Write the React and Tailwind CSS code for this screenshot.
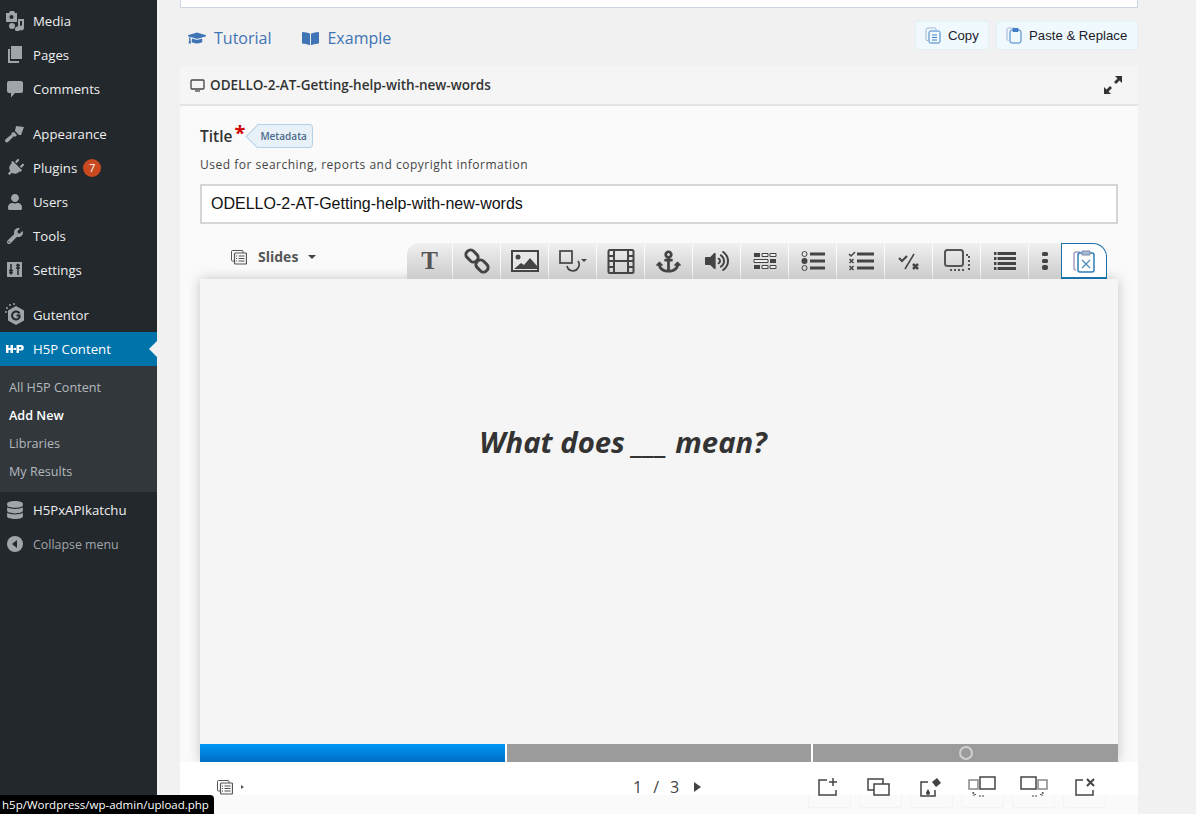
import { FaAnchor, FaVolumeUp, FaGraduationCap, FaBookOpen, FaPlug, FaUser, FaWrench, FaDatabase } from 'react-icons/fa'

const openSans = "font-['Open_Sans','Noto_Sans',sans-serif]"

function MediaIcon() {
  return (
    <svg width="20" height="20" viewBox="0 0 20 20" fill="#a0a5aa">
      <path d="M1 2h3l1-2h4l1 2h2v9H1z" />
      <circle cx="6.500" cy="6" r="2" fill="#23282d" />
      <path d="M13 8h6v9a2.500 2.500 0 1 1-2-2.400V10h-2v8a2.500 2.500 0 1 1-2-2.400zM7 12a2.500 2.500 0 1 1 0 6 2.500 2.500 0 0 1 0-6z" />
    </svg>
  )
}

function PagesIcon() {
  return (
    <svg width="20" height="20" viewBox="0 0 20 20" fill="#a0a5aa">
      <path d="M6 1h11v13H6z" />
      <path d="M3 4h2v12h9v2H3z" />
    </svg>
  )
}

function CommentIcon() {
  return (
    <svg width="18" height="18" viewBox="0 0 18 18" fill="#a0a5aa">
      <path d="M3 1h12a2 2 0 0 1 2 2v8a2 2 0 0 1-2 2H9l-4 4.500V13H3a2 2 0 0 1-2-2V3a2 2 0 0 1 2-2z" />
    </svg>
  )
}

function BrushIcon() {
  return (
    <svg width="20" height="18" viewBox="0 0 20 18" fill="#a0a5aa">
      <path d="M11 1l8 1-3 8-2 0-4-4z" />
      <path d="M9 7l3 3-2 2-1-1-6 6c-1 1-3 0-3-1s0-1 1-2l6-5-1-1z" />
    </svg>
  )
}

function SettingsIcon() {
  return (
    <svg width="18" height="18" viewBox="0 0 18 18">
      <path d="M1 1h15v15H1z" fill="#a0a5aa" />
      <path d="M5 3v10M3 9.500h4M5 13l-1.500-2M5 13l1.500-2M12 14V4M10 7h4M12 3l-1.500 2M12 3l1.500 2" stroke="#23282d" strokeWidth="1.500" fill="none" />
    </svg>
  )
}

function GutentorIcon() {
  return (
    <svg width="22" height="24" viewBox="0 0 22 24">
      <path d="M12 3l8 4.500v10L12 22l-8-4.500v-10z" fill="#a0a5aa" />
      <path d="M15.500 10.500a4 4 0 1 0 0 4V12.500h-3" stroke="#23282d" strokeWidth="2" fill="none" />
      <g fill="#a0a5aa">
        <circle cx="3" cy="5" r="1" />
        <circle cx="6" cy="2" r="1" />
        <circle cx="2" cy="9" r="1" />
        <circle cx="10" cy="1" r="1" />
      </g>
    </svg>
  )
}

function H5pIcon() {
  return (
    <svg width="18" height="10" viewBox="0 0 18 10" fill="#fff">
      <path d="M0 1h2.500v3h2V1H7v8H4.500V6h-2v3H0z" />
      <path d="M7.500 4h2.500v2H7.500z" />
      <path d="M10.500 1H15a2.800 2.800 0 0 1 0 5.600h-2V9h-2.500zM13 3v1.800h1.500a.9.900 0 0 0 0-1.800z" fillRule="evenodd" />
    </svg>
  )
}

function CollapseIcon() {
  return (
    <svg width="16" height="16" viewBox="0 0 16 16">
      <circle cx="8" cy="8" r="8" fill="#a0a5aa" />
      <path d="M10 4v8L5 8z" fill="#23282d" />
    </svg>
  )
}

function MenuRow({ icon, label, badge }) {
  return (
    <div className="flex h-[34px] items-center text-[13.200px] text-[#eeeeee]">
      <span className="flex w-[33px] shrink-0 items-center justify-center pr-[3px]">{icon}</span>
      <span className="mt-[2px]">{label}</span>
      {badge && (
        <span className="ml-[6px] flex h-[18px] w-[18px] items-center justify-center rounded-full bg-[#ca4a1f] text-[11px] text-white">
          {badge}
        </span>
      )}
    </div>
  )
}

function Sidebar() {
  const grey = '#a0a5aa'
  return (
    <aside className={`w-[157px] shrink-0 bg-[#23282d] pt-1 ${openSans}`}>
      <MenuRow icon={<MediaIcon />} label="Media" />
      <MenuRow icon={<PagesIcon />} label="Pages" />
      <MenuRow icon={<CommentIcon />} label="Comments" />
      <div className="h-[11px]" />
      <MenuRow icon={<BrushIcon />} label="Appearance" />
      <MenuRow icon={<FaPlug size={18} color={grey} className="rotate-45" />} label="Plugins" badge="7" />
      <MenuRow icon={<FaUser size={16} color={grey} />} label="Users" />
      <MenuRow icon={<FaWrench size={16} color={grey} />} label="Tools" />
      <MenuRow icon={<SettingsIcon />} label="Settings" />
      <div className="h-[11px]" />
      <MenuRow icon={<GutentorIcon />} label="Gutentor" />
      <div className="relative bg-[#0073aa]">
        <MenuRow icon={<H5pIcon />} label={<span className="text-white">H5P Content</span>} />
        <span className="absolute right-0 top-[9px] h-0 w-0 border-y-[8px] border-r-[8px] border-y-transparent border-r-[#f1f1f1]" />
      </div>
      <div className="bg-[#32373c] pb-[6px] pt-[8px] text-[12.600px] text-[#b4b9be]">
        <div className="flex h-[28px] items-center pl-[9px]">All H5P Content</div>
        <div className="flex h-[28px] items-center pl-[9px] font-semibold text-white">Add New</div>
        <div className="flex h-[28px] items-center pl-[9px]">Libraries</div>
        <div className="flex h-[28px] items-center pl-[9px]">My Results</div>
      </div>
      <div className="h-px" />
      <MenuRow icon={<FaDatabase size={18} color={grey} />} label="H5PxAPIkatchu" />
      <div className="flex h-[34px] items-center text-[12.400px] text-[#a0a5aa]">
        <span className="flex w-[33px] shrink-0 items-center justify-center pr-[3px]"><CollapseIcon /></span>
        <span className="mt-[3px]">Collapse menu</span>
      </div>
    </aside>
  )
}

function CopyIcon() {
  return (
    <svg width="16" height="17" viewBox="0 0 16 17" fill="none" stroke="#3f7fc4" strokeWidth="1">
      <path d="M3 13.500H2a1 1 0 0 1-1-1V3a2 2 0 0 1 2-2h7a1 1 0 0 1 1 1v1" stroke="#9fb8d4" />
      <rect x="4" y="4" width="11" height="12" rx="1.500" />
      <path d="M7 8h5M7 10.500h5M7 13h5" />
    </svg>
  )
}

function PasteIcon() {
  return (
    <svg width="16" height="17" viewBox="0 0 16 17" fill="none" stroke="#3f7fc4" strokeWidth="1">
      <path d="M2.500 13.500a1.500 1.500 0 0 1-1.500-1.500V2.500A1.500 1.500 0 0 1 2.500 1h6" stroke="#9fb8d4" />
      <rect x="4" y="3" width="11" height="13" rx="2" />
      <path d="M7 1.500h5V4.500H7z" fill="#3f7fc4" />
    </svg>
  )
}

const ic = { fill: 'none', stroke: '#444', strokeWidth: 2 }

const toolIcons = [
  <span className="mb-[2px] font-['Liberation_Serif',serif] text-[25px] font-bold leading-none text-[#555]">T</span>,
  <svg width="26" height="26" viewBox="0 0 26 26" fill="none" stroke="#444" strokeWidth="3">
    <rect x="1.500" y="3.500" width="13" height="9" rx="4" transform="rotate(45 8 8)" />
    <rect x="11.500" y="13.500" width="13" height="9" rx="4" transform="rotate(45 18 18)" />
  </svg>,
  <svg width="28" height="22" viewBox="0 0 28 22">
    <rect x="1" y="1" width="26" height="20" fill="#e6e6e6" stroke="#444" strokeWidth="2" />
    <circle cx="7" cy="7" r="2.500" fill="#444" />
    <path d="M3 19l7-6 3 2 6-7 7 8v3z" fill="#444" />
  </svg>,
  <svg width="28" height="24" viewBox="0 0 28 24" {...ic} strokeWidth="1.700">
    <rect x="1" y="2" width="12" height="12" />
    <path d="M8 17a6 6 0 0 0 11 2 6 6 0 0 0 0-7" />
    <path d="M22 10h6l-3 3z" fill="#444" stroke="none" />
  </svg>,
  <svg width="28" height="26" viewBox="0 0 28 26" {...ic}>
    <rect x="1.500" y="2" width="25" height="23" rx="1.500" />
    <path d="M7 2v23M21 2v23M7 13h14M1.500 8H7M1.500 13H7M1.500 19H7M21 8h5.500M21 13h5.500M21 19h5.500" />
  </svg>,
  <FaAnchor size={25} color="#444" />,
  <FaVolumeUp size={24} color="#444" />,
  <svg width="24" height="20" viewBox="0 0 24 20">
    <path d="M1 2h6v4H1zM1 14h6v4H1zM17 8h6v4h-6z" fill="#444" />
    <path d="M9 2.500h6v3H9zM1 8.500h14v3H1zM9 14.500h6v3H9zM17 2.500h6v3h-6zM17 14.500h6v3h-6z" fill="#eee" stroke="#444" />
  </svg>,
  <svg width="24" height="20" viewBox="0 0 24 20">
    <circle cx="3.500" cy="3" r="2.500" fill="none" stroke="#444" />
    <circle cx="3.500" cy="10" r="3" fill="#444" />
    <circle cx="3.500" cy="17" r="2.500" fill="none" stroke="#444" />
    <path d="M9 3h15M9 10h15M9 17h15" stroke="#444" strokeWidth="3" />
  </svg>,
  <svg width="26" height="20" viewBox="0 0 26 20" fill="none" stroke="#444">
    <path d="M1 3l2 2 4-4M1.500 8l4 4M5.500 8l-4 4M1.500 15l4 4M5.500 15l-4 4" strokeWidth="1.500" />
    <path d="M9 3h17M9 10h17M9 17h17" strokeWidth="3" />
  </svg>,
  <svg width="22" height="20" viewBox="0 0 22 20" fill="none" stroke="#444" strokeWidth="2">
    <path d="M1 7l3 3 5-5" />
    <path d="M7 18L16 3" strokeWidth="1.500" />
    <path d="M15 13l5 5M20 13l-5 5" strokeWidth="2.500" />
  </svg>,
  <svg width="26" height="24" viewBox="0 0 26 24" fill="none" stroke="#555">
    <rect x="1" y="1" width="18" height="16" rx="2.500" strokeWidth="2" />
    <path d="M22 6h3v14h-3M6 21h16" strokeWidth="2" strokeDasharray="2 2" />
  </svg>,
  <svg width="22" height="18" viewBox="0 0 22 18">
    <path d="M0 1.500h22M0 6.500h22M0 11.500h22M0 16.500h22" stroke="#444" strokeWidth="3" />
    <path d="M3 0v18" stroke="#eee" strokeWidth="1" />
  </svg>,
  <svg width="6" height="18" viewBox="0 0 6 18" fill="#444">
    <rect width="6" height="4" y="0" rx="1.500" />
    <rect width="6" height="4" y="7" rx="1.500" />
    <rect width="6" height="5" y="13" rx="2" />
  </svg>,
]

const toolWidths = ['w-[45px]', 'w-[47px]', 'w-[47px]', 'w-[47px]', 'w-[47px]', 'w-[47px]', 'w-[47px]', 'w-[47px]', 'w-[47px]', 'w-[47px]', 'w-[47px]', 'w-[47px]', 'w-[47px]', 'w-[32px]']

function ClipboardIcon() {
  return (
    <svg width="22" height="24" viewBox="0 0 22 24" fill="none" stroke="#2f7fb8" strokeWidth="1">
      <path d="M3 21a2 2 0 0 1-2-2V5a2 2 0 0 1 2-2h4" stroke="#a79fc2" strokeWidth="1.500" />
      <rect x="5" y="4" width="16" height="19" rx="2" strokeWidth="1.500" />
      <path d="M9 2h8v4H9z" fill="#a9b9d2" stroke="#7a8cb0" />
      <path d="M9 11l8 8M17 11l-8 8" stroke="#4a8ab8" strokeWidth="1.200" />
    </svg>
  )
}

function Toolbar() {
  return (
    <div className="flex h-[36px] justify-end pr-[11px]">
      <div className="flex items-stretch gap-px overflow-hidden rounded-tl-xl">
        {toolIcons.map((icon, i) => (
          <div
            key={i}
            className={`flex items-center justify-center bg-gradient-to-b from-[#f0f0f0] to-[#cccccc] ${toolWidths[i]}`}
          >
            {icon}
          </div>
        ))}
      </div>
      <div className="flex w-[46px] items-center justify-center rounded-tr-[14px] border border-b-2 border-[#1a72ab] bg-white">
        <ClipboardIcon />
      </div>
    </div>
  )
}

function SlidesIcon({ size = 16 }) {
  return (
    <svg width={size} height={size} viewBox="0 0 16 16" fill="none" stroke="#555" strokeWidth="1">
      <path d="M3 12H1.500a1 1 0 0 1-1-1V2.500a1 1 0 0 1 1-1H11a1 1 0 0 1 1 1V4" />
      <rect x="3.500" y="4" width="12" height="11" rx="1" strokeWidth="1.200" fill="#f8f8f8" />
      <path d="M7.500 7h6M7.500 9.500h6M7.500 12h6M5 7h1M5 9.500h1M5 12h1" />
    </svg>
  )
}

const line = { fill: 'none', stroke: '#444', strokeWidth: 1.500 }

const footerIcons = [
  <svg width="20" height="18" viewBox="0 0 20 18" {...line}>
    <path d="M9 2H1v15h17v-5" />
    <path d="M15 0v8M11 4h8" />
  </svg>,
  <svg width="24" height="18" viewBox="0 0 24 18" {...line}>
    <path d="M7 12H1V1h15v5" />
    <rect x="7" y="6" width="15" height="11" />
  </svg>,
  <svg width="22" height="20" viewBox="0 0 22 20">
    <path d="M8 5H1v14h14v-6" {...line} />
    <path d="M12 5l5-4 4 5-5 4z" fill="#444" />
    <path d="M8 12c1 2 2 3 2 4a2 2 0 0 1-4 0c0-1 1-2 2-4z" fill="#444" />
  </svg>,
  <svg width="28" height="22" viewBox="0 0 28 22" {...line}>
    <rect x="1" y="4" width="9" height="9" stroke="#888" />
    <rect x="12" y="1" width="15" height="12" />
    <path d="M5 16l3 3M5 16v3h3M11 20h5" strokeWidth="1" strokeDasharray="2 1" />
  </svg>,
  <svg width="28" height="22" viewBox="0 0 28 22" {...line}>
    <rect x="1" y="1" width="15" height="12" />
    <rect x="18" y="4" width="9" height="9" stroke="#888" />
    <path d="M23 16l-3 3M23 16v3h-3M17 20h-5" strokeWidth="1" strokeDasharray="2 1" />
  </svg>,
  <svg width="20" height="18" viewBox="0 0 20 18" {...line}>
    <path d="M8 2H1v15h17v-5" />
    <path d="M12 1l7 7M19 1l-7 7" strokeWidth="2" />
  </svg>,
]

function Editor() {
  return (
    <div className="bg-[#fafafa] px-5 pt-[18px]">
      <div className="flex h-[24px] items-center">
        <span className="mt-[2px] text-[15.500px] font-semibold text-[#333]">Title</span>
        <span className="mb-[6px] ml-[2px] text-[20px] font-bold leading-none text-[#d00000]">*</span>
        <span className="relative ml-[12px] flex h-[24px] items-center rounded-r-[4px] border border-l-0 border-[#b7d0e6] bg-[#e9f1f8] pl-[3px] pr-[5px] text-[10px] font-semibold text-[#4a6a8a]">
          <span className="absolute left-[-8px] top-[3px] h-[17px] w-[17px] rotate-45 border-b border-l border-[#b7d0e6] bg-[#e9f1f8]" />
          <span className="relative">Metadata</span>
        </span>
      </div>
      <p className="mt-[9px] text-[12px] leading-[16px] tracking-[0.5px] text-[#444]">Used for searching, reports and copyright information</p>
      <div className="mt-[11px] flex h-[40px] items-center border-2 border-[#d5d5d5] bg-white px-[9px] font-['Liberation_Sans',sans-serif] text-[16px] text-[#111]">
        ODELLO-2-AT-Getting-help-with-new-words
      </div>
      <div className="relative mt-[19px]">
        <div className="absolute left-[31px] top-[3px] flex items-center">
          <SlidesIcon />
          <span className="ml-[11px] text-[14px] font-bold text-[#555]">Slides</span>
          <span className="ml-[10px] h-0 w-0 border-x-[4px] border-t-[4px] border-x-transparent border-t-[#444]" />
        </div>
        <Toolbar />
      </div>
      <div className="shadow-[0_0_12px_rgba(0,0,0,0.22)]">
        <div className="flex h-[465px] items-center justify-center bg-[#f5f5f5] pb-[138px] pr-[72px]">
          <h2 className="text-[29.300px] font-bold italic text-[#333]">What does ___ mean?</h2>
        </div>
        <div className="flex h-[18px] gap-[2px] bg-white">
          <div className="flex-1 bg-gradient-to-b from-[#0096f5] to-[#006fc6]" />
          <div className="flex-1 bg-[#9b9b9b]" />
          <div className="flex flex-1 items-center justify-center bg-[#9b9b9b]">
            <span className="h-[14px] w-[14px] rounded-full border-2 border-[#cfcfcf]" />
          </div>
        </div>
      </div>
    </div>
  )
}

function Footer() {
  return (
    <div>
      <div className="flex h-[33px] items-center bg-white pl-[37px] pr-[27px] pt-[16px] text-[#444]">
        <SlidesIcon />
        <span className="ml-[8px] h-0 w-0 border-y-[2px] border-l-[3px] border-y-transparent border-l-[#555]" />
        <div className="ml-[389px] flex items-center gap-[11px] text-[16px]">
          <span>1</span>
          <span>/</span>
          <span>3</span>
          <span className="ml-[4px] h-0 w-0 border-y-[5px] border-l-[7px] border-y-transparent border-l-[#444]" />
        </div>
        <div className="ml-auto flex items-center">
          {footerIcons.map((icon, i) => (
            <span key={i} className="flex w-[51.500px] items-center justify-center">{icon}</span>
          ))}
        </div>
      </div>
      <div className="flex h-[30px] justify-end gap-[8px] bg-[#fafafa] pr-[32px]">
        {footerIcons.map((icon, i) => (
          <span key={i} className="h-[13px] w-[43px] rounded-b-[3px] border-x border-b border-[#f3f3f3]" />
        ))}
      </div>
    </div>
  )
}

export default function App() {
  return (
    <div className={`relative flex h-[814px] w-[1196px] overflow-hidden bg-[#f1f1f1] ${openSans}`}>
      <Sidebar />
      <main className="min-w-0 flex-1 pl-[23px] pr-[58px]">
        <div className="h-2 border-x border-b border-[#cdd5e0] bg-white" />
        <div className="flex h-[58px] items-center justify-between">
          <div className="flex items-center pl-2 pt-[2px] text-[16px] text-[#3f74b5]">
            <FaGraduationCap size={18} />
            <span className="ml-[8px]">Tutorial</span>
            <FaBookOpen size={17} className="ml-[31px]" />
            <span className="ml-[8px]">Example</span>
          </div>
          <div className="mb-[4px] flex gap-[7px] font-['Liberation_Sans',sans-serif] text-[13.200px] text-[#1a1a2a]">
            <button className="flex h-[29px] w-[74px] items-center gap-[7px] rounded-[3px] border border-[#e3f0f5] bg-[#f0f9fe] pl-[9px] pt-px">
              <CopyIcon />Copy
            </button>
            <button className="flex h-[29px] w-[142px] items-center gap-[7px] rounded-[3px] border border-[#e3f0f5] bg-[#f0f9fe] pl-[9px] pt-px">
              <PasteIcon />Paste &amp; Replace
            </button>
          </div>
        </div>
        <div className="flex h-[40px] items-center justify-between border-b-2 border-[#e4e4e4] bg-[#f5f5f5] pl-[10px] pr-[16px]">
          <div className="flex items-center text-[13.500px] font-semibold text-[#333]">
            <svg width="15" height="13" viewBox="0 0 15 13" fill="none" stroke="#444" strokeWidth="1.300" className="mr-[5px]">
              <rect x="1" y="1" width="13" height="9" rx="1" />
              <path d="M5 12h5" />
            </svg>
            ODELLO-2-AT-Getting-help-with-new-words
          </div>
          <svg width="18" height="18" viewBox="0 0 18 18" fill="#333">
            <path d="M11 0h7v7l-2.500-2.500L12 8l-2-2 3.500-3.500zM0 11l2.500 2.500L6 10l2 2-3.500 3.500L7 18H0z" />
          </svg>
        </div>
        <Editor />
        <Footer />
      </main>
      <div className="absolute bottom-0 left-0 flex h-[19px] w-[214px] items-center whitespace-nowrap rounded-tr-[4px] bg-black pl-[2px] text-[11.500px] text-white">
        h5p/Wordpress/wp-admin/upload.php
      </div>
    </div>
  )
}
